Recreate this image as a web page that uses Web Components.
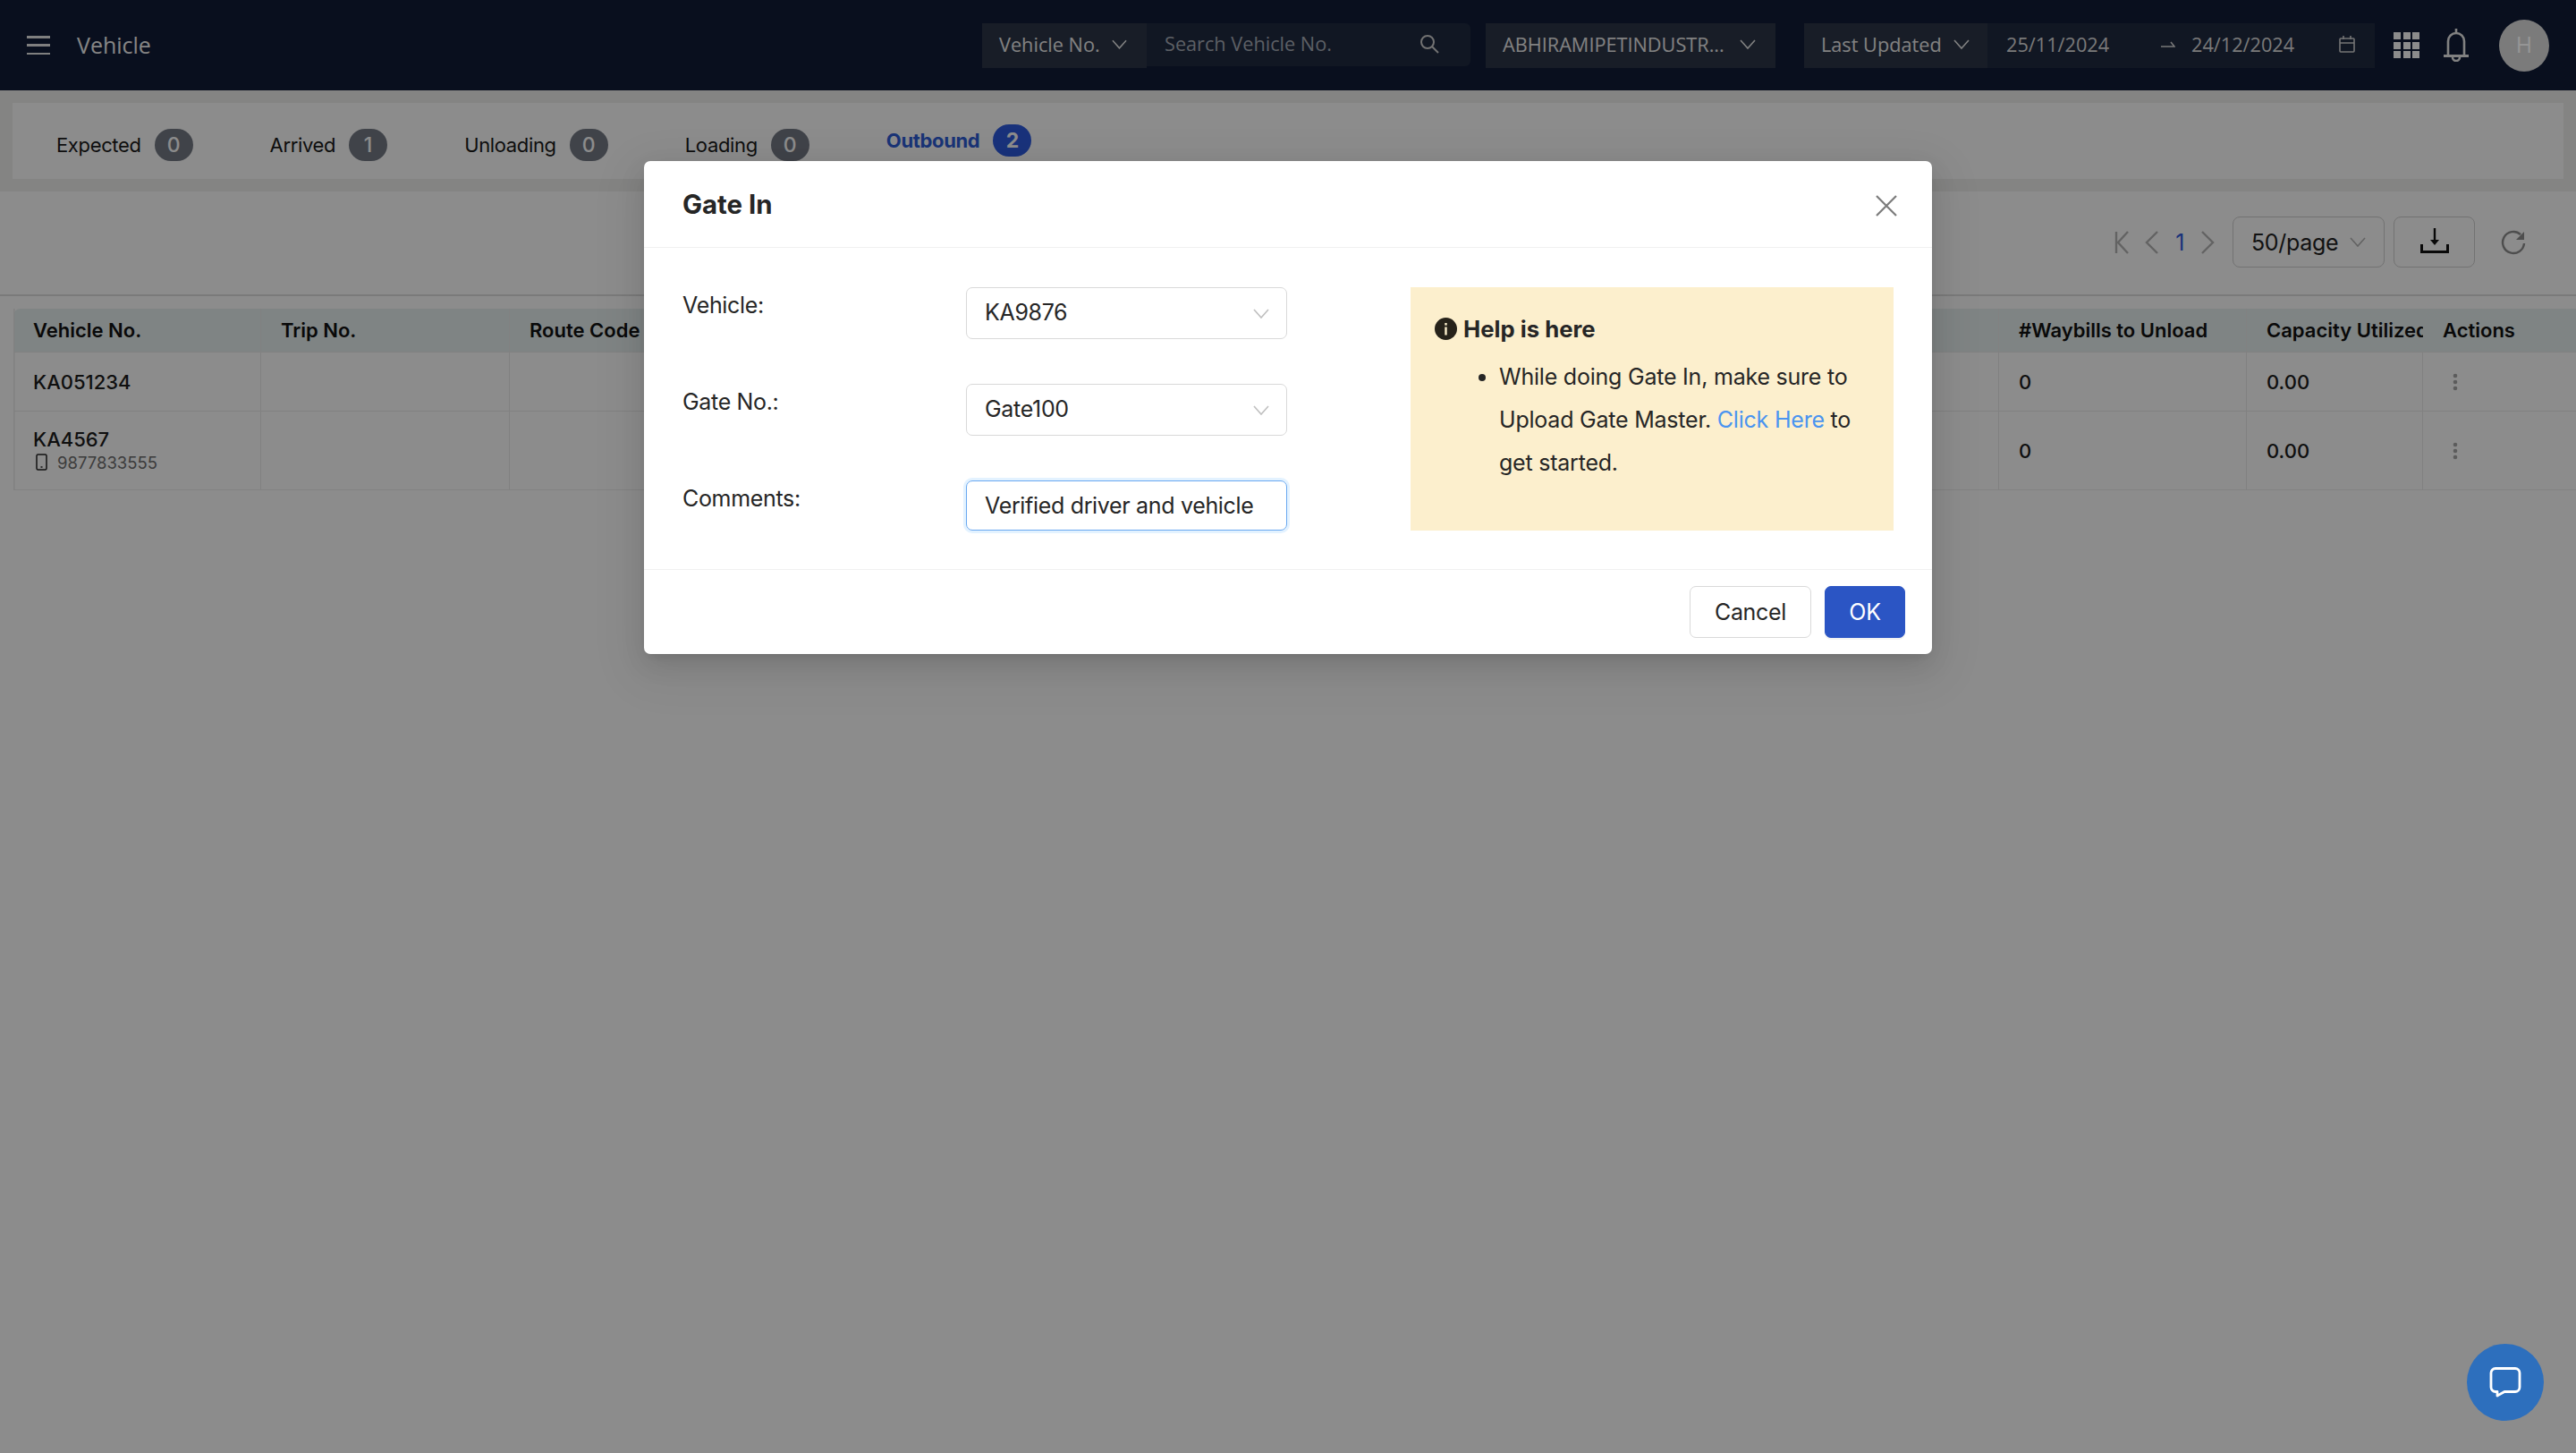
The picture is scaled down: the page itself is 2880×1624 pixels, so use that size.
<!DOCTYPE html>
<html>
<head>
<meta charset="utf-8">
<title>Vehicle</title>
<style>
  html, body { margin: 0; padding: 0; height: 100%; background: #fff; }
  body { width: 2880px; height: 1624px; overflow: hidden; position: relative; font-family: Inter, "Liberation Sans", sans-serif; }
</style>
</head>
<body>
<app-header></app-header>
<status-tabs>
  <status-tab count="0">Expected</status-tab>
  <status-tab count="1">Arrived</status-tab>
  <status-tab count="0">Unloading</status-tab>
  <status-tab count="0">Loading</status-tab>
  <status-tab count="2" active>Outbound</status-tab>
</status-tabs>
<page-toolbar></page-toolbar>
<data-table></data-table>
<modal-mask></modal-mask>
<gate-modal>
  <span slot="title">Gate In</span>
  <form-select slot="vehicle" value="KA9876"></form-select>
  <form-select slot="gate" value="Gate100"></form-select>
  <form-input slot="comments" value="Verified driver and vehicle"></form-input>
  <help-box slot="help"></help-box>
</gate-modal>
<chat-button></chat-button>

<script>
const chevron = (w, color) => `<svg width="${w}" height="${Math.round(w * 0.62)}" viewBox="0 0 18 11" fill="none" stroke="${color}" stroke-width="1.6"><path d="M1 1l8 9 8-9"/></svg>`;

class AppHeader extends HTMLElement {
  connectedCallback() {
    this.attachShadow({ mode: 'open' });
    this.shadowRoot.innerHTML = `
      <style>
        :host { display: flex; align-items: center; height: 101px; box-sizing: border-box; padding: 0 30px; background: #121d37; color: #fff; font: 21.7px "Open Sans", sans-serif; }
        .burger { display: flex; flex-direction: column; justify-content: space-between; width: 26px; height: 21px; margin-right: 30px; }
        .burger i { display: block; height: 2.5px; background: #e8e8e8; }
        .title { font-size: 25px; color: #f2f2f2; padding-bottom: 2px; }
        .filters { display: flex; align-items: flex-start; height: 50px; }
        .box { display: flex; align-items: center; justify-content: space-between; box-sizing: border-box; height: 50px; background: #2c3648; color: #ececec; padding: 0 22px 2px 19px; white-space: nowrap; }
        .veh { width: 184px; }
        .search { width: 362px; height: 48px; background: #1f2a41; border-radius: 0 6px 6px 0; padding: 0 35px 2px 20px; color: #a8adb7; margin-right: 17px; }
        .org { width: 324px; margin-right: 32px; }
        .upd { width: 205px; padding-right: 20px; }
        .range { width: 433px; background: #1f2a41; padding: 0 22px 2px 21px; color: #dcdcdc; }
        .range .d1 { width: 173px; }
        .range .arrow { margin-right: 18px; flex: none; }
        .range .d2 { margin-right: auto; }
        .grid { display: grid; grid-template-columns: repeat(3, 8px); grid-auto-rows: 8px; gap: 2.5px; margin-left: 21px; }
        .grid i { background: #fff; }
        .bell { margin-left: 27px; }
        .avatar { position: relative; z-index: 1; width: 56px; height: 58px; border-radius: 50%; background: #7b7b7b; color: #959595; margin-left: 34px; display: flex; align-items: center; justify-content: center; font: 24px Inter, sans-serif; }
        .right { display: flex; align-items: center; margin-left: auto; }
      </style>
      <div class="burger"><i></i><i></i><i></i></div>
      <span class="title">Vehicle</span>
      <div class="right">
        <div class="filters">
          <div class="box veh"><span>Vehicle No.</span>${chevron(17, '#ececec')}</div>
          <div class="box search"><span>Search Vehicle No.</span>
            <svg width="22" height="22" viewBox="0 0 22 22" fill="none" stroke="#d0d0d0" stroke-width="2"><circle cx="9" cy="9" r="7"/><path d="M14 14l7 7"/></svg>
          </div>
          <div class="box org"><span>ABHIRAMIPETINDUSTR...</span>${chevron(18, '#ececec')}</div>
          <div class="box upd"><span>Last Updated</span>${chevron(18, '#ececec')}</div>
          <div class="box range">
            <span class="d1">25/11/2024</span>
            <svg class="arrow" width="16" height="8" viewBox="0 0 16 8" fill="none" stroke="#dcdcdc" stroke-width="1.5"><path d="M0 6h15L11 1"/></svg>
            <span class="d2">24/12/2024</span>
            <svg width="18" height="19" viewBox="0 0 18 19" fill="none" stroke="#d4d4d4" stroke-width="1.6"><rect x="1" y="3" width="16" height="15" rx="1"/><path d="M1 8h16M5 0v4M13 0v4"/></svg>
          </div>
        </div>
        <div class="grid">${'<i></i>'.repeat(9)}</div>
        <svg class="bell" width="28" height="37" viewBox="0 0 28 37" fill="none" stroke="#ececec" stroke-width="2.6"><path d="M14 0v4M5 30V14a9 9 0 0 1 18 0v16"/><path d="M0 30.500h28" stroke-width="3"/><path d="M10 32a4 4 0 0 0 8 0"/></svg>
        <div class="avatar">H</div>
      </div>
    `;
  }
}

class StatusTabs extends HTMLElement {
  connectedCallback() {
    this.attachShadow({ mode: 'open' });
    this.shadowRoot.innerHTML = `
      <style>
        :host { display: block; background: #f1f1ee; padding: 14px 14px; height: 113px; box-sizing: border-box; }
        .panel { display: flex; align-items: center; height: 85px; background: #fff; box-sizing: border-box; padding: 0 0 0 49px; gap: 86px; }
      </style>
      <div class="panel"><slot></slot></div>
    `;
  }
}

class StatusTab extends HTMLElement {
  connectedCallback() {
    this.attachShadow({ mode: 'open' });
    const active = this.hasAttribute('active');
    this.shadowRoot.innerHTML = `
      <style>
        :host { display: flex; align-items: center; gap: 15px; font: ${active ? 700 : 400} 22px Inter, sans-serif; letter-spacing: -0.35px; color: ${active ? '#2f5ed8' : '#1a1a1a'}; position: relative; top: ${active ? '-0.5px' : '4px'}; }
        .badge { display: flex; align-items: center; justify-content: center; width: 43px; height: 36px; border-radius: 18px; background: ${active ? '#2f5ce0' : '#757b86'}; color: #fff; font-size: 23px; font-weight: ${active ? 700 : 500}; letter-spacing: 0; }
      </style>
      <slot></slot><span class="badge">${this.getAttribute('count')}</span>
    `;
  }
}

class PageToolbar extends HTMLElement {
  connectedCallback() {
    this.attachShadow({ mode: 'open' });
    this.shadowRoot.innerHTML = `
      <style>
        :host { display: flex; align-items: center; justify-content: flex-end; height: 117px; box-sizing: border-box; border-bottom: 2px solid #dedede; padding: 0 56px 2px 0; font: 25px Inter, sans-serif; letter-spacing: -0.33px; color: #222; }
        svg { display: block; }
        .nav { margin-right: 18px; }
        .page { color: #2f5ce0; margin: 0 19px 0 19px; }
        .box { box-sizing: border-box; height: 57px; border: 1.5px solid #d0d0d0; border-radius: 8px; display: flex; align-items: center; }
        .size { width: 170px; justify-content: space-between; padding: 0 20px; margin: 0 10px 0 20px; }
        .dl { width: 91px; justify-content: center; margin-right: 29px; }
        .dl svg { margin-bottom: 4px; }
      </style>
      <svg class="nav" width="16" height="26" viewBox="0 0 16 26" fill="none" stroke="#b4b4b4" stroke-width="2.4"><path d="M2 1v24M15 1L4 13l11 12"/></svg>
      <svg width="15" height="26" viewBox="0 0 15 26" fill="none" stroke="#b4b4b4" stroke-width="2.4"><path d="M14 1L2 13l12 12"/></svg>
      <span class="page">1</span>
      <svg width="15" height="26" viewBox="0 0 15 26" fill="none" stroke="#b4b4b4" stroke-width="2.4"><path d="M1 1l12 12L1 25"/></svg>
      <div class="box size"><span>50/page</span>${chevron(18, '#b4b4b4')}</div>
      <div class="box dl">
        <svg width="32" height="28" viewBox="0 0 32 28" fill="none" stroke="#111" stroke-width="2.4"><path d="M16 0v14"/><path d="M11 13h10l-5 6z" fill="#111" stroke="none"/><path d="M1.500 18v8.500h29V18" stroke-width="3"/></svg>
      </div>
      <svg width="28" height="28" viewBox="0 0 28 28" fill="none" stroke="#8e8e8e" stroke-width="2.400"><path d="M26 15A12 12 0 1 1 22 5"/><path d="M26 2v9h-9z" fill="#8e8e8e" stroke="none"/></svg>
    `;
  }
}

class DataTable extends HTMLElement {
  connectedCallback() {
    this.attachShadow({ mode: 'open' });
    const dots = `<svg class="dots" width="6" height="20" viewBox="0 0 6 20" fill="#a8a8a8"><circle cx="3" cy="3" r="2.300"/><circle cx="3" cy="10" r="2.300"/><circle cx="3" cy="17" r="2.300"/></svg>`;
    const phone = `<svg width="13" height="19" viewBox="0 0 13 19" fill="none" stroke="#222" stroke-width="1.500"><rect x="1" y="1" width="11" height="17" rx="1.500"/><path d="M5.500 15h2"/></svg>`;
    const row = (cls, cells) => `<div class="row ${cls}">${cells.map(c => `<div class="cell">${c}</div>`).join('')}</div>`;
    const blanks = n => Array(n).fill('');
    this.shadowRoot.innerHTML = `
      <style>
        :host { display: block; margin: 14px 0 0 15px; font: 500 22px Inter, sans-serif; color: #1c1c1c; }
        .row { display: grid; grid-template-columns: 277px 278px repeat(6, 277.5px) 277px 197px 1fr; border-bottom: 1.5px solid #ececec; box-sizing: border-box; }
        .head { height: 49px; background: #e7f0f0; border-radius: 8px 0 0 0; font-weight: 600; color: #111; }
        .r1 { height: 66px; }
        .r2 { height: 88px; }
        .cell { display: flex; flex-direction: column; justify-content: center; padding-left: 22px; border-right: 1.5px solid #ececec; white-space: nowrap; overflow: hidden; box-sizing: border-box; }
        .cell:first-child { box-shadow: inset 1.5px 0 #ececec; }
        .row .cell:last-child { border-right: none; }
        .head .cell:nth-last-child(2) { border-right: none; }
        .dots { margin-left: 11px; }
        .name { line-height: 26px; }
        .sub { display: flex; align-items: center; gap: 11px; height: 26px; font-size: 18.500px; font-weight: 400; color: #6e6e6e; padding-left: 3px; }
      </style>
      ${row('head', ['Vehicle No.', 'Trip No.', 'Route Code', ...blanks(5), '#Waybills to Unload', 'Capacity Utilized', 'Actions'])}
      ${row('r1', ['KA051234', ...blanks(7), '0', '0.00', dots])}
      ${row('r2', [`<span class="name">KA4567</span><span class="sub">${phone}9877833555</span>`, ...blanks(7), '0', '0.00', dots])}
    `;
  }
}

class ModalMask extends HTMLElement {
  connectedCallback() {
    this.attachShadow({ mode: 'open' });
    this.shadowRoot.innerHTML = `<style>:host { display: block; position: absolute; inset: 0; background: rgba(0, 0, 0, 0.45); }</style>`;
  }
}

class GateModal extends HTMLElement {
  connectedCallback() {
    this.attachShadow({ mode: 'open' });
    this.shadowRoot.innerHTML = `
      <style>
        :host { display: flex; flex-direction: column; position: absolute; z-index: 2; left: 720px; top: 180px; width: 1440px; height: 551px; background: #fff; border-radius: 7px; font: 25px Inter, sans-serif; letter-spacing: -0.33px; color: #262626; box-shadow: 0 11px 29px rgba(0,0,0,.1), 0 5px 11px -7px rgba(0,0,0,.14), 0 16px 51px 15px rgba(0,0,0,.06); }
        header { display: flex; align-items: center; justify-content: space-between; height: 97px; box-sizing: border-box; padding: 0 39px 0 43px; border-bottom: 1.5px solid #f0f0f0; font-size: 29.400px; font-weight: 700; letter-spacing: 0; }
        header svg { margin-top: 3px; }
        .body { display: flex; justify-content: space-between; padding: 44px 43px 43px; height: 359.500px; box-sizing: border-box; border-bottom: 1.5px solid #f0f0f0; }
        .form { display: grid; grid-template-columns: 317px 359px; grid-template-rows: 58px 58px 56px; row-gap: 50px; }
        label { line-height: 40px; }
        footer { display: flex; justify-content: flex-end; align-items: flex-start; gap: 15px; padding: 18px 30px 0; }
        button { box-sizing: border-box; height: 58px; border-radius: 7px; font: 25px Inter, sans-serif; letter-spacing: -0.33px; padding: 0; }
        .cancel { width: 136px; background: #fff; border: 1.5px solid #d9d9d9; color: #262626; }
        .ok { width: 90px; background: #2b55c4; border: 1.5px solid #2b55c4; color: #fff; box-shadow: 0 2px 0 rgba(0,0,0,.05); }
      </style>
      <header>
        <slot name="title"></slot>
        <svg width="24" height="24" viewBox="0 0 24 24" fill="none" stroke="#7c7c7c" stroke-width="2.200"><path d="M1 1l22 22M23 1L1 23"/></svg>
      </header>
      <div class="body">
        <div class="form">
          <label>Vehicle:</label><slot name="vehicle"></slot>
          <label>Gate No.:</label><slot name="gate"></slot>
          <label>Comments:</label><slot name="comments"></slot>
        </div>
        <slot name="help"></slot>
      </div>
      <footer>
        <button class="cancel">Cancel</button>
        <button class="ok">OK</button>
      </footer>
    `;
  }
}

class FormSelect extends HTMLElement {
  connectedCallback() {
    this.attachShadow({ mode: 'open' });
    this.shadowRoot.innerHTML = `
      <style>
        :host { display: flex; align-items: center; justify-content: space-between; box-sizing: border-box; height: 58px; border: 1.5px solid #d9d9d9; border-radius: 7px; padding: 0 19px 0 20px; }
        span { position: relative; top: -1.5px; }
      </style>
      <span>${this.getAttribute('value')}</span>${chevron(18, '#bfbfbf')}
    `;
  }
}

class FormInput extends HTMLElement {
  connectedCallback() {
    this.attachShadow({ mode: 'open' });
    this.shadowRoot.innerHTML = `
      <style>
        :host { display: flex; align-items: center; box-sizing: border-box; height: 56px; border: 1.5px solid #69a8f0; border-radius: 7px; padding: 0 20px; box-shadow: 0 0 0 3px rgba(24, 144, 255, .12); white-space: nowrap; }
      </style>
      <span>${this.getAttribute('value')}</span>
    `;
  }
}

class HelpBox extends HTMLElement {
  connectedCallback() {
    this.attachShadow({ mode: 'open' });
    this.shadowRoot.innerHTML = `
      <style>
        :host { display: block; box-sizing: border-box; width: 540px; height: 272px; background: #fcefcd; padding: 26px 27px 0; }
        .title { display: flex; align-items: center; gap: 7px; height: 40px; font-size: 25.7px; font-weight: 700; letter-spacing: 0; }
        ul { margin: 10px 0 0; padding: 0 0 0 72px; line-height: 48px; letter-spacing: -0.22px; }
        a { color: #4a94f0; text-decoration: none; }
      </style>
      <div class="title">
        <svg width="25" height="25" viewBox="0 0 25 25"><circle cx="12.500" cy="12.500" r="12.500" fill="#26221a"/><rect x="11.300" y="10.500" width="2.400" height="9" fill="#fcefcd"/><rect x="11.300" y="6" width="2.400" height="2.600" fill="#fcefcd"/></svg>
        <span>Help is here</span>
      </div>
      <ul><li>While doing Gate In, make sure to<br>Upload Gate Master. <a href="#">Click Here</a> to<br>get started.</li></ul>
    `;
  }
}

class ChatButton extends HTMLElement {
  connectedCallback() {
    this.attachShadow({ mode: 'open' });
    this.shadowRoot.innerHTML = `
      <style>
        :host { display: flex; align-items: center; justify-content: center; position: absolute; z-index: 2; right: 36px; bottom: 36px; width: 86px; height: 86px; border-radius: 50%; background: #2d6fbd; }
      </style>
      <svg width="36" height="34" viewBox="0 0 36 34" fill="none" stroke="#fff" stroke-width="2.800" stroke-linejoin="round"><path d="M7 1.500h22a5 5 0 0 1 5 5v16a5 5 0 0 1-5 5H17l-8 4.500v-4.500H7a5 5 0 0 1-5-5v-16a5 5 0 0 1 5-5z"/></svg>
    `;
  }
}

customElements.define('app-header', AppHeader);
customElements.define('status-tabs', StatusTabs);
customElements.define('status-tab', StatusTab);
customElements.define('page-toolbar', PageToolbar);
customElements.define('data-table', DataTable);
customElements.define('modal-mask', ModalMask);
customElements.define('gate-modal', GateModal);
customElements.define('form-select', FormSelect);
customElements.define('form-input', FormInput);
customElements.define('help-box', HelpBox);
customElements.define('chat-button', ChatButton);
</script>
</body>
</html>
